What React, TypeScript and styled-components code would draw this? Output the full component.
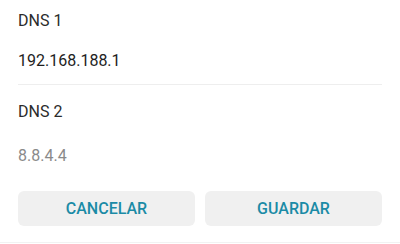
import styled, { createGlobalStyle } from "styled-components";

const GlobalStyle = createGlobalStyle`
  html, body {
    margin: 0;
    padding: 0;
    background: #ffffff;
  }
  body {
    font-family: Roboto, "Liberation Sans", Arial, sans-serif;
    -webkit-font-smoothing: antialiased;
  }
`;

function App() {
  return (
    <Dialog>
      <GlobalStyle />
      <Field $top={10.5} $bottom={13.5} $divider>
        <Label>DNS 1</Label>
        <Value $gap={20}>192.168.188.1</Value>
      </Field>

      <Field $top={16.5} $bottom={0}>
        <Label>DNS 2</Label>
        <Value $gap={24} $muted>
          8.8.4.4
        </Value>
      </Field>

      <Actions>
        <ActionButton>CANCELAR</ActionButton>
        <ActionButton>GUARDAR</ActionButton>
      </Actions>
    </Dialog>
  );
}

export default App;

const Dialog = styled.div`
  width: 400px;
  padding-bottom: 16px;
  border-bottom: 1px solid #f2f2f2;
`;

const Field = styled.div<{ $top: number; $bottom: number; $divider?: boolean }>`
  margin: 0 18px;
  padding-top: ${(p) => p.$top}px;
  padding-bottom: ${(p) => p.$bottom}px;
  border-bottom: ${(p) => (p.$divider ? "1px solid #eeeeee" : "none")};
`;

const Label = styled.div`
  font-size: 16px;
  line-height: 20px;
  color: #2b2b2b;
`;

const Value = styled.div<{ $gap: number; $muted?: boolean }>`
  margin-top: ${(p) => p.$gap}px;
  font-size: 16px;
  line-height: 20px;
  color: ${(p) => (p.$muted ? "#8a8a8a" : "#1e1e1e")};
`;

const Actions = styled.div`
  display: grid;
  grid-template-columns: 1fr 1fr;
  gap: 10px;
  margin: 25.5px 18px 0;
`;

const ActionButton = styled.button`
  height: 35px;
  border: none;
  border-radius: 6px;
  background: #f0f0f0;
  color: #1b8ba6;
  font-family: Roboto, "Liberation Sans", Arial, sans-serif;
  font-size: 16px;
  font-weight: 500;
  padding: 0;
  cursor: pointer;
`;
